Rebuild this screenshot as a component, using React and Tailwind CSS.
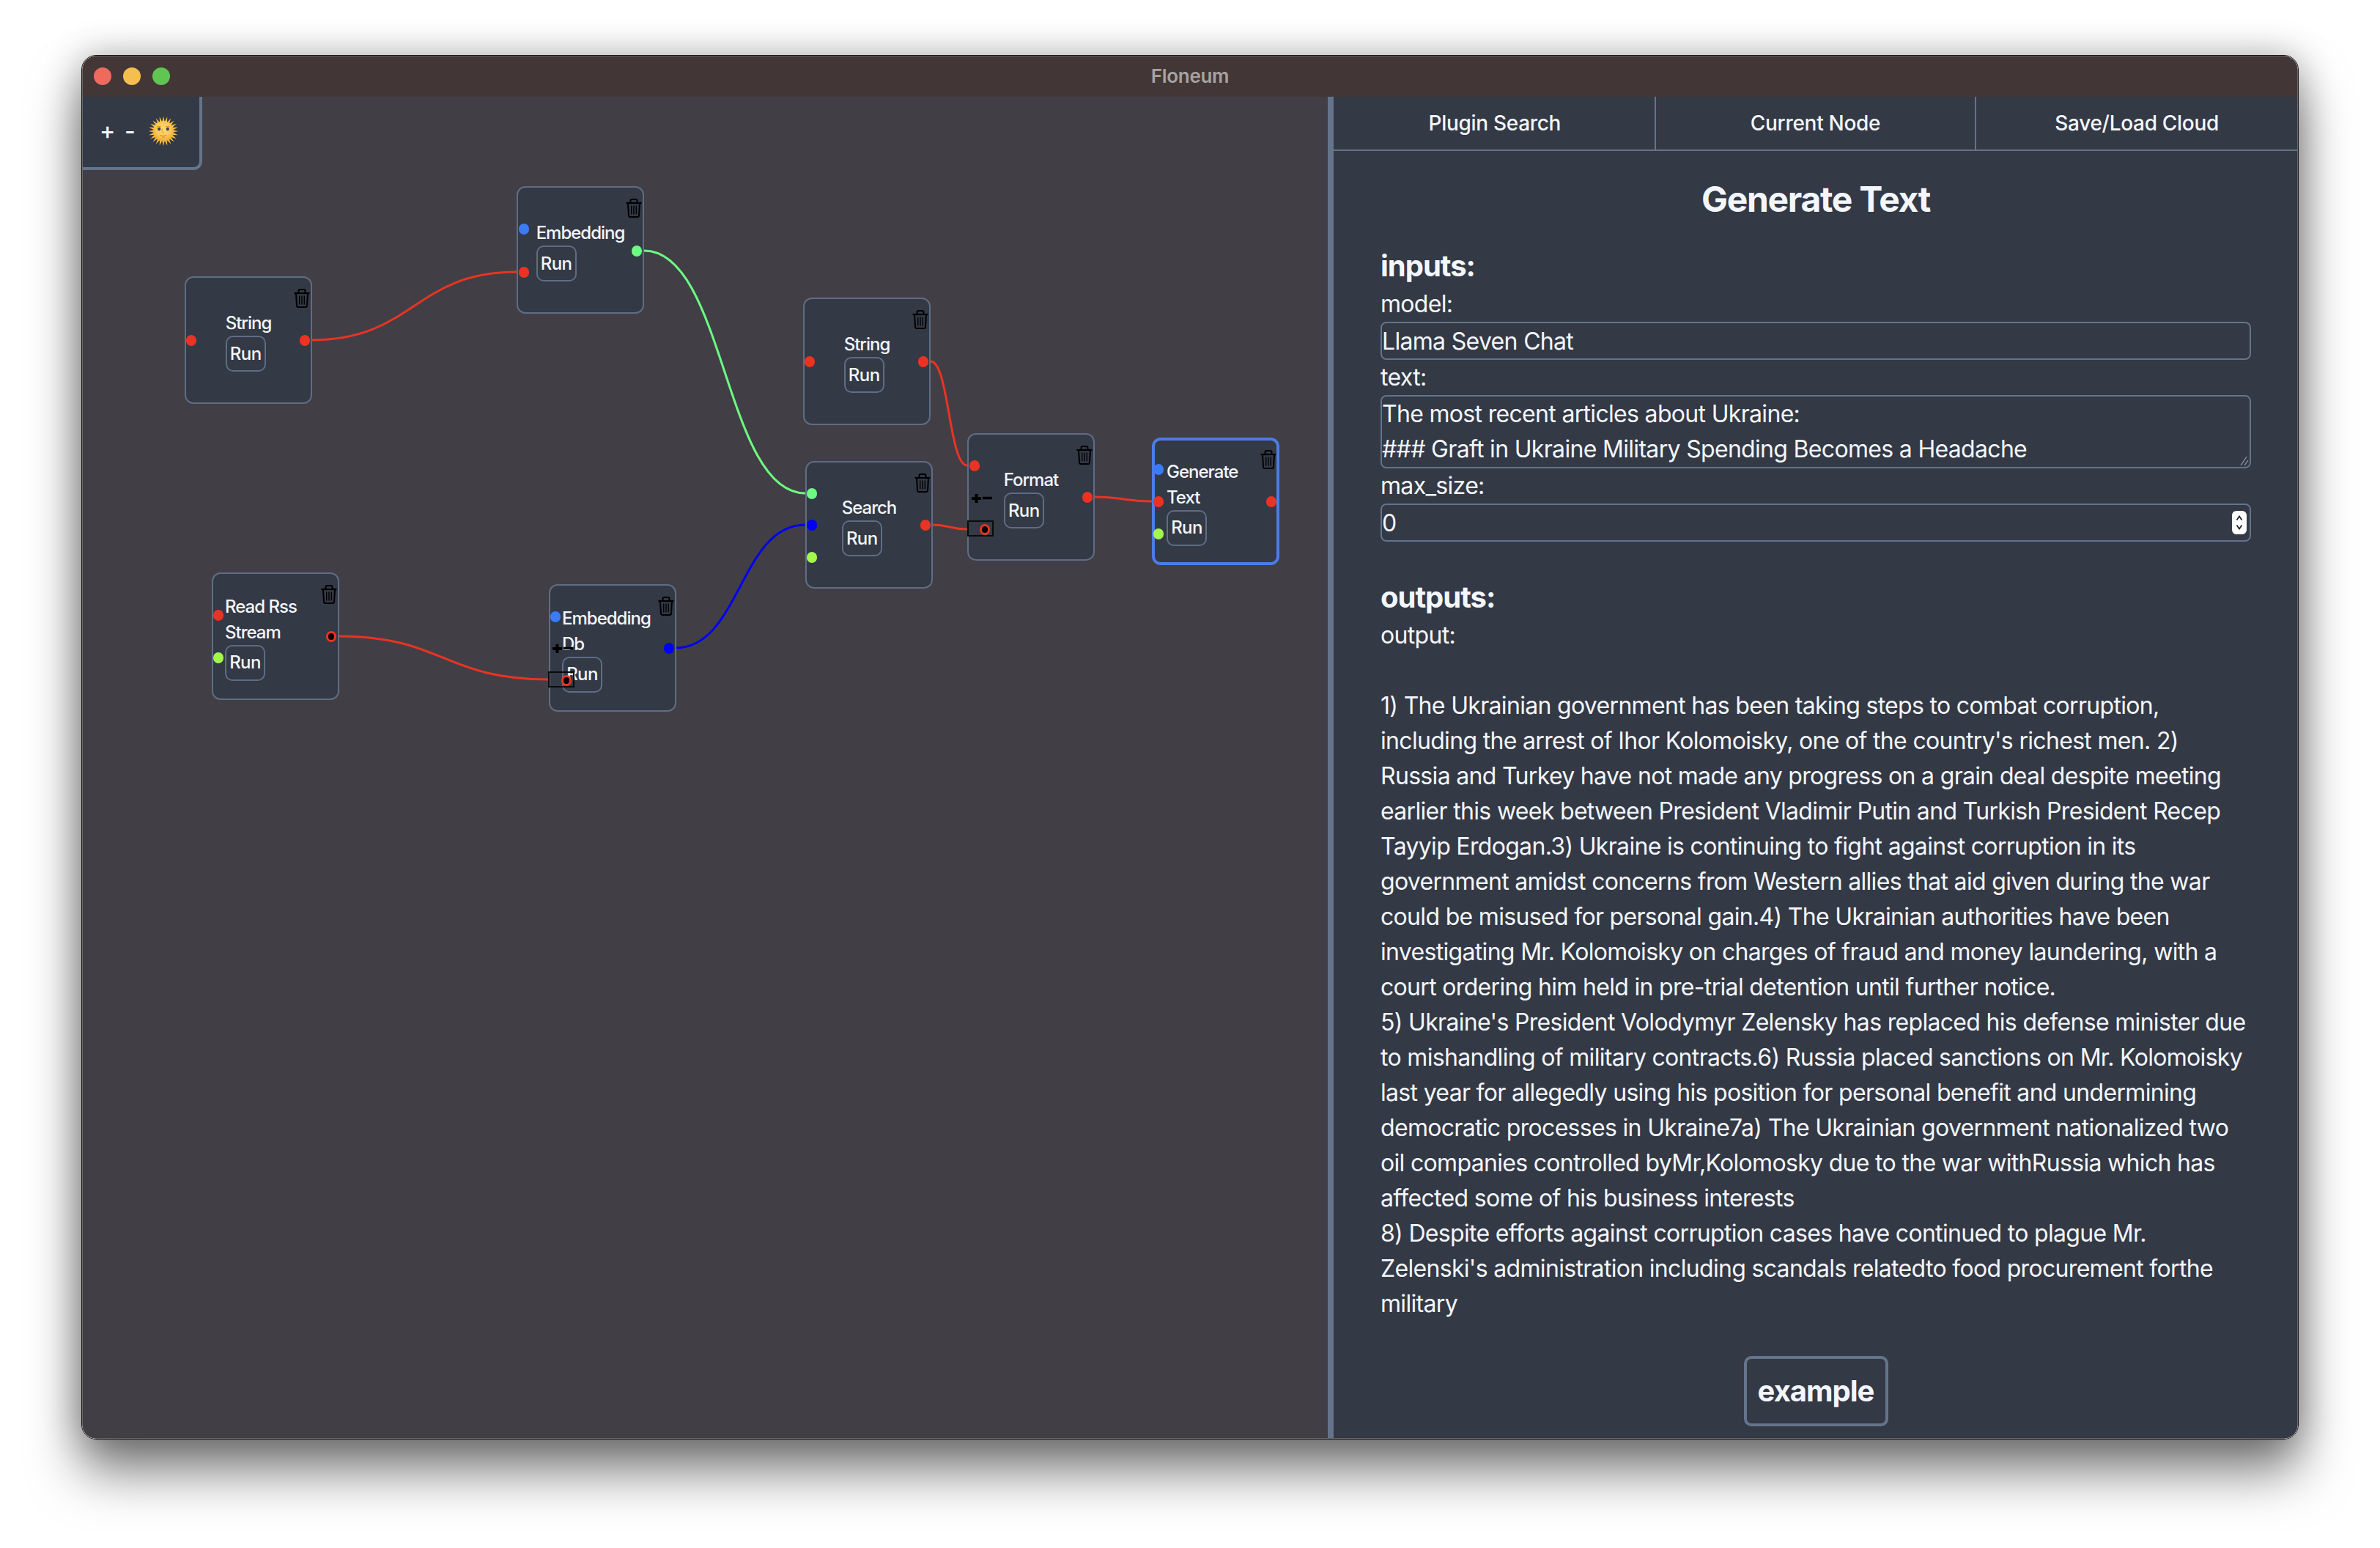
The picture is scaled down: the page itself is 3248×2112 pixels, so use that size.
import React from "react";

const RED = "#ea3323";
const GREEN = "#6efb83";
const BLUE = "#0000f5";
const LIME = "#a4f74b";
const SKY = "#3b7cf6";

const OX = 113;
const OY = 132;

const nodes = [
  { x: 252, y: 377, label: "String", handles: [[261, 464, RED], [416, 464, RED]] },
  { x: 705, y: 254, label: "Embedding", handles: [[715, 312, SKY], [715, 371, RED], [869, 342, GREEN]] },
  { x: 1096, y: 406, label: "String", handles: [[1105, 493, RED], [1260, 493, RED]] },
  { x: 1099, y: 629, label: "Search", handles: [[1108, 673, GREEN], [1108, 716, BLUE], [1108, 760, LIME], [1263, 716, RED]] },
  {
    x: 1320, y: 591, label: "Format",
    handles: [[1330, 635, RED], [1484, 678, RED]],
    box: [1320, 710], ring: [1344, 722], pm: [1325, 673],
  },
  { x: 1572, y: 597, label: "Generate Text", selected: true, handles: [[1581, 640, SKY], [1581, 684, RED], [1581, 728, LIME], [1735, 684, RED]] },
  { x: 289, y: 781, label: "Read Rss Stream", handles: [[298, 839, RED], [298, 897, LIME]], ring: [452, 868] },
  {
    x: 749, y: 797, label: "Embedding Db",
    handles: [[758, 841, SKY], [913, 884, BLUE]],
    box: [748, 916], ring: [773, 928], pm: [753, 878],
  },
];

const edges = [
  ["M425 464 C565 464 565 371 705 371", RED],
  ["M879 342 C989 342 989 673 1099 673", GREEN],
  ["M1270 493 C1295 493 1295 635 1320 635", RED],
  ["M922 884 C1010 884 1010 716 1099 716", BLUE],
  ["M1272 716 C1296 716 1296 722 1320 722", RED],
  ["M1494 678 C1533 678 1533 684 1572 684", RED],
  ["M462 868 C605 868 605 927 749 927", RED],
];

const outputText = [
  "1) The Ukrainian government has been taking steps to combat corruption,",
  "including the arrest of Ihor Kolomoisky, one of the country's richest men. 2)",
  "Russia and Turkey have not made any progress on a grain deal despite meeting",
  "earlier this week between President Vladimir Putin and Turkish President Recep",
  "Tayyip Erdogan.3) Ukraine is continuing to fight against corruption in its",
  "government amidst concerns from Western allies that aid given during the war",
  "could be misused for personal gain.4) The Ukrainian authorities have been",
  "investigating Mr. Kolomoisky on charges of fraud and money laundering, with a",
  "court ordering him held in pre-trial detention until further notice.",
  "5) Ukraine's President Volodymyr Zelensky has replaced his defense minister due",
  "to mishandling of military contracts.6) Russia placed sanctions on Mr. Kolomoisky",
  "last year for allegedly using his position for personal benefit and undermining",
  "democratic processes in Ukraine7a) The Ukrainian government nationalized two",
  "oil companies controlled byMr,Kolomosky due to the war withRussia which has",
  "affected some of his business interests",
  "8) Despite efforts against corruption cases have continued to plague Mr.",
  "Zelenski's administration including scandals relatedto food procurement forthe",
  "military",
];

function Trash({ selected }) {
  return (
    <svg
      width="22"
      height="26"
      viewBox="0 0 22 26"
      fill="none"
      stroke="#000"
      strokeWidth="2"
      className={`absolute ${selected ? "right-0 top-[13px]" : "right-[1px] top-[15px]"}`}
    >
      <path d="M0.5 6 H21.5" strokeWidth="2.2" />
      <path d="M6.5 5.5 V3 Q6.5 1 8.5 1 H13.5 Q15.5 1 15.5 3 V5.5" />
      <path d="M3 6.5 L4 23 Q4.1 25 6 25 H16 Q17.9 25 18 23 L19 6.5" />
      <path d="M7.7 9.5 V21.5 M11 9.5 V21.5 M14.3 9.5 V21.5" strokeWidth="1.4" />
    </svg>
  );
}

function PlusMinus({ x, y }) {
  return (
    <svg width="30" height="14" viewBox="0 0 30 14" className="absolute" style={{ left: x, top: y }}>
      <path d="M1 7 H14 M7.5 1 V13" stroke="#000" strokeWidth="4" />
      <path d="M16 6.5 H29" stroke="#000" strokeWidth="3.5" />
    </svg>
  );
}

function Node({ n }) {
  return (
    <>
      <div
        className={`absolute box-border flex h-[174px] w-[174px] items-center justify-center rounded-[12px] bg-[#333945] p-4 ${
          n.selected ? "border-4 border-[#4a7de6]" : "border-2 border-[#5f6d84]"
        }`}
        style={{ left: n.x - OX, top: n.y - OY }}
      >
        <Trash selected={n.selected} />
        <div className="flex translate-y-[1px] flex-col items-start">
          <div className="text-[24px] font-medium leading-[35px] tracking-[-1px] text-[#f3f6fb]">{n.label}</div>
          <div className="flex h-[49px] w-[55px] items-center justify-center rounded-[10px] border-2 border-[#5f6d84] text-[24px] font-medium tracking-[-0.6px] text-[#f3f6fb]">
            Run
          </div>
        </div>
      </div>
      {n.box && (
        <div
          className="absolute h-[22px] w-[36px] border-2 border-[#0b0b0b]"
          style={{ left: n.box[0] - OX, top: n.box[1] - OY }}
        />
      )}
      {n.pm && <PlusMinus x={n.pm[0] - OX} y={n.pm[1] - OY} />}
      {n.handles.map(([x, y, c], i) => (
        <div
          key={i}
          className="absolute h-[15px] w-[14px] rounded-full"
          style={{ left: x - 7 - OX, top: y - 7.5 - OY, background: c }}
        />
      ))}
      {n.ring && (
        <div
          className="absolute h-[15px] w-[14px] rounded-full border-[3px] border-[#ea3323] bg-black"
          style={{ left: n.ring[0] - 7 - OX, top: n.ring[1] - 7.5 - OY }}
        />
      )}
    </>
  );
}

function Sun() {
  const long = Array.from({ length: 24 }, (_, i) => (i * 360) / 24);
  return (
    <svg width="42" height="42" viewBox="0 0 42 42">
      <defs>
        <radialGradient id="sunface" cx="50%" cy="42%" r="58%">
          <stop offset="0%" stopColor="#fcdc76" />
          <stop offset="65%" stopColor="#f9c653" />
          <stop offset="100%" stopColor="#eea237" />
        </radialGradient>
      </defs>
      {long.map((a) => (
        <path key={a} d="M19.4 8 L21 0.5 L22.6 8 Z" fill="#f5bd45" transform={`rotate(${a} 21 21)`} />
      ))}
      <circle cx="21" cy="21" r="14" fill="url(#sunface)" />
      <ellipse cx="15.2" cy="18" rx="2.1" ry="2.2" fill="#3c3f55" />
      <ellipse cx="26.8" cy="18" rx="2.1" ry="2.2" fill="#3c3f55" />
      <path d="M12 15 Q15 13.5 18 15 M24 15 Q27 13.5 30 15" stroke="#d48f30" strokeWidth="0.9" fill="none" />
      <path d="M19.4 17.5 Q18.6 22 20 23 Q21 23.5 22 23" stroke="#d9962f" strokeWidth="0.9" fill="none" />
      <path d="M16.5 26.5 Q21 29.2 25.5 26.5" stroke="#c8842a" strokeWidth="1.1" fill="none" />
      <path d="M19 29.5 Q21 30.5 23 29.5" stroke="#d9962f" strokeWidth="0.8" fill="none" />
    </svg>
  );
}

function Label({ children }) {
  return <div className="h-[48px] leading-[48px]">{children}</div>;
}

const fieldClass =
  "block w-full box-border rounded-[8px] border-2 border-[#64748b] bg-transparent text-[32px] leading-[48px] tracking-[-0.68px] text-[#f3f6fb] outline-none";

export default function App() {
  return (
    <div className="h-[2112px] w-[3248px] overflow-hidden bg-white pl-[111px] pt-[75px] font-['Inter',sans-serif]">
      <div className="box-border h-[1889px] w-[3026px] overflow-hidden rounded-[20px] border border-[#141414] shadow-[0_44px_70px_rgba(0,0,0,0.5),0_0_50px_rgba(0,0,0,0.28)]">
        <div className="box-border flex h-full w-full flex-col overflow-hidden rounded-[19px] border border-[#6a6665] bg-[#413f45]">
          <div className="relative flex h-[55px] shrink-0 items-center justify-center bg-[#423736] pb-[2px]">
            <div className="absolute left-[15px] top-[15px] flex gap-4">
              <div className="h-6 w-6 rounded-full bg-[#ee6a5e]" />
              <div className="h-6 w-6 rounded-full bg-[#f5bf4f]" />
              <div className="h-6 w-6 rounded-full bg-[#61c554]" />
            </div>
            <div className="text-[26px] font-semibold tracking-[-0.3px] text-[#a8a2a1]">Floneum</div>
          </div>
          <div className="flex min-h-0 flex-1">
            <div className="relative min-w-0 flex-1 bg-[#413f45]">
              <svg className="absolute left-0 top-0" width="1700" height="1830" viewBox={`${OX} ${OY} 1700 1830`} fill="none">
                {edges.map(([d, c], i) => (
                  <path key={i} d={d} stroke={c} strokeWidth="3" />
                ))}
              </svg>
              {nodes.map((n, i) => (
                <Node key={i} n={n} />
              ))}
              <div className="absolute left-0 top-0 box-border flex h-[100px] w-[163px] items-center rounded-br-[12px] border-b-4 border-r-4 border-[#64748b] bg-[#333945] pl-[23px] pb-[2px] text-[32px] font-medium text-[#f3f6fb]">
                <span className="w-[34px]">+</span>
                <span className="w-[32px]">-</span>
                <Sun />
              </div>
            </div>
            <div className="box-border flex h-full w-[1323px] shrink-0 flex-col border-l-[8px] border-[#64748b] bg-[#333945] text-[32px] leading-[48px] tracking-[-0.68px] text-[#f3f6fb]">
              <div className="grid h-[74px] shrink-0 grid-cols-3 border-b-2 border-[#64748b] pl-[2px] text-[28px] font-medium tracking-[-0.3px]">
                <div className="flex items-center justify-center border-r-2 border-[#64748b]">Plugin Search</div>
                <div className="flex items-center justify-center border-r-2 border-[#64748b]">Current Node</div>
                <div className="flex items-center justify-center">Save/Load Cloud</div>
              </div>
              <div className="flex flex-1 flex-col pl-[64px] pr-[63px]">
                <div className="mt-[34px] text-center text-[48px] font-bold leading-[64px] tracking-[-1.3px]">Generate Text</div>
                <div className="mt-[31px] text-[40px] font-bold leading-[56px] tracking-[-1px]">inputs:</div>
                <Label>model:</Label>
                <input readOnly value="Llama Seven Chat" className={`${fieldClass} h-[52px]`} />
                <Label>text:</Label>
                <div className="relative">
                  <textarea
                    readOnly
                    rows={2}
                    value={"The most recent articles about Ukraine:\n### Graft in Ukraine Military Spending Becomes a Headache"}
                    className={`${fieldClass} h-[100px] resize-none`}
                  />
                  <svg width="12" height="14" viewBox="0 0 12 14" fill="none" stroke="#9aa3b0" strokeWidth="1.2" className="absolute bottom-[3px] right-[3px]">
                    <path d="M1 13 L9 1 M6 13 L11 6" />
                  </svg>
                </div>
                <Label>max_size:</Label>
                <div className="relative">
                  <input readOnly value="0" className={`${fieldClass} h-[52px]`} />
                  <div className="absolute right-[6px] top-[10px] flex h-[32px] w-[20px] flex-col items-center justify-center gap-[4px] rounded-[6px] bg-white">
                    <svg width="10" height="8" viewBox="0 0 10 8" fill="none" stroke="#222" strokeWidth="1.8">
                      <path d="M1.5 6.5 L5 1.5 L8.5 6.5" />
                    </svg>
                    <svg width="10" height="8" viewBox="0 0 10 8" fill="none" stroke="#222" strokeWidth="1.8">
                      <path d="M1.5 1.5 L5 6.5 L8.5 1.5" />
                    </svg>
                  </div>
                </div>
                <div className="mt-[48px] text-[40px] font-bold leading-[56px] tracking-[-1px]">outputs:</div>
                <Label>output:</Label>
                <div className="mt-[48px] whitespace-pre-line">{outputText.join("\n")}</div>
                <div className="mt-[47px] flex justify-center">
                  <div className="box-border flex h-[96px] w-[197px] items-center justify-center rounded-[10px] border-4 border-[#64748b] text-[40px] font-bold tracking-[-1px]">
                    example
                  </div>
                </div>
              </div>
            </div>
          </div>
        </div>
      </div>
    </div>
  );
}
